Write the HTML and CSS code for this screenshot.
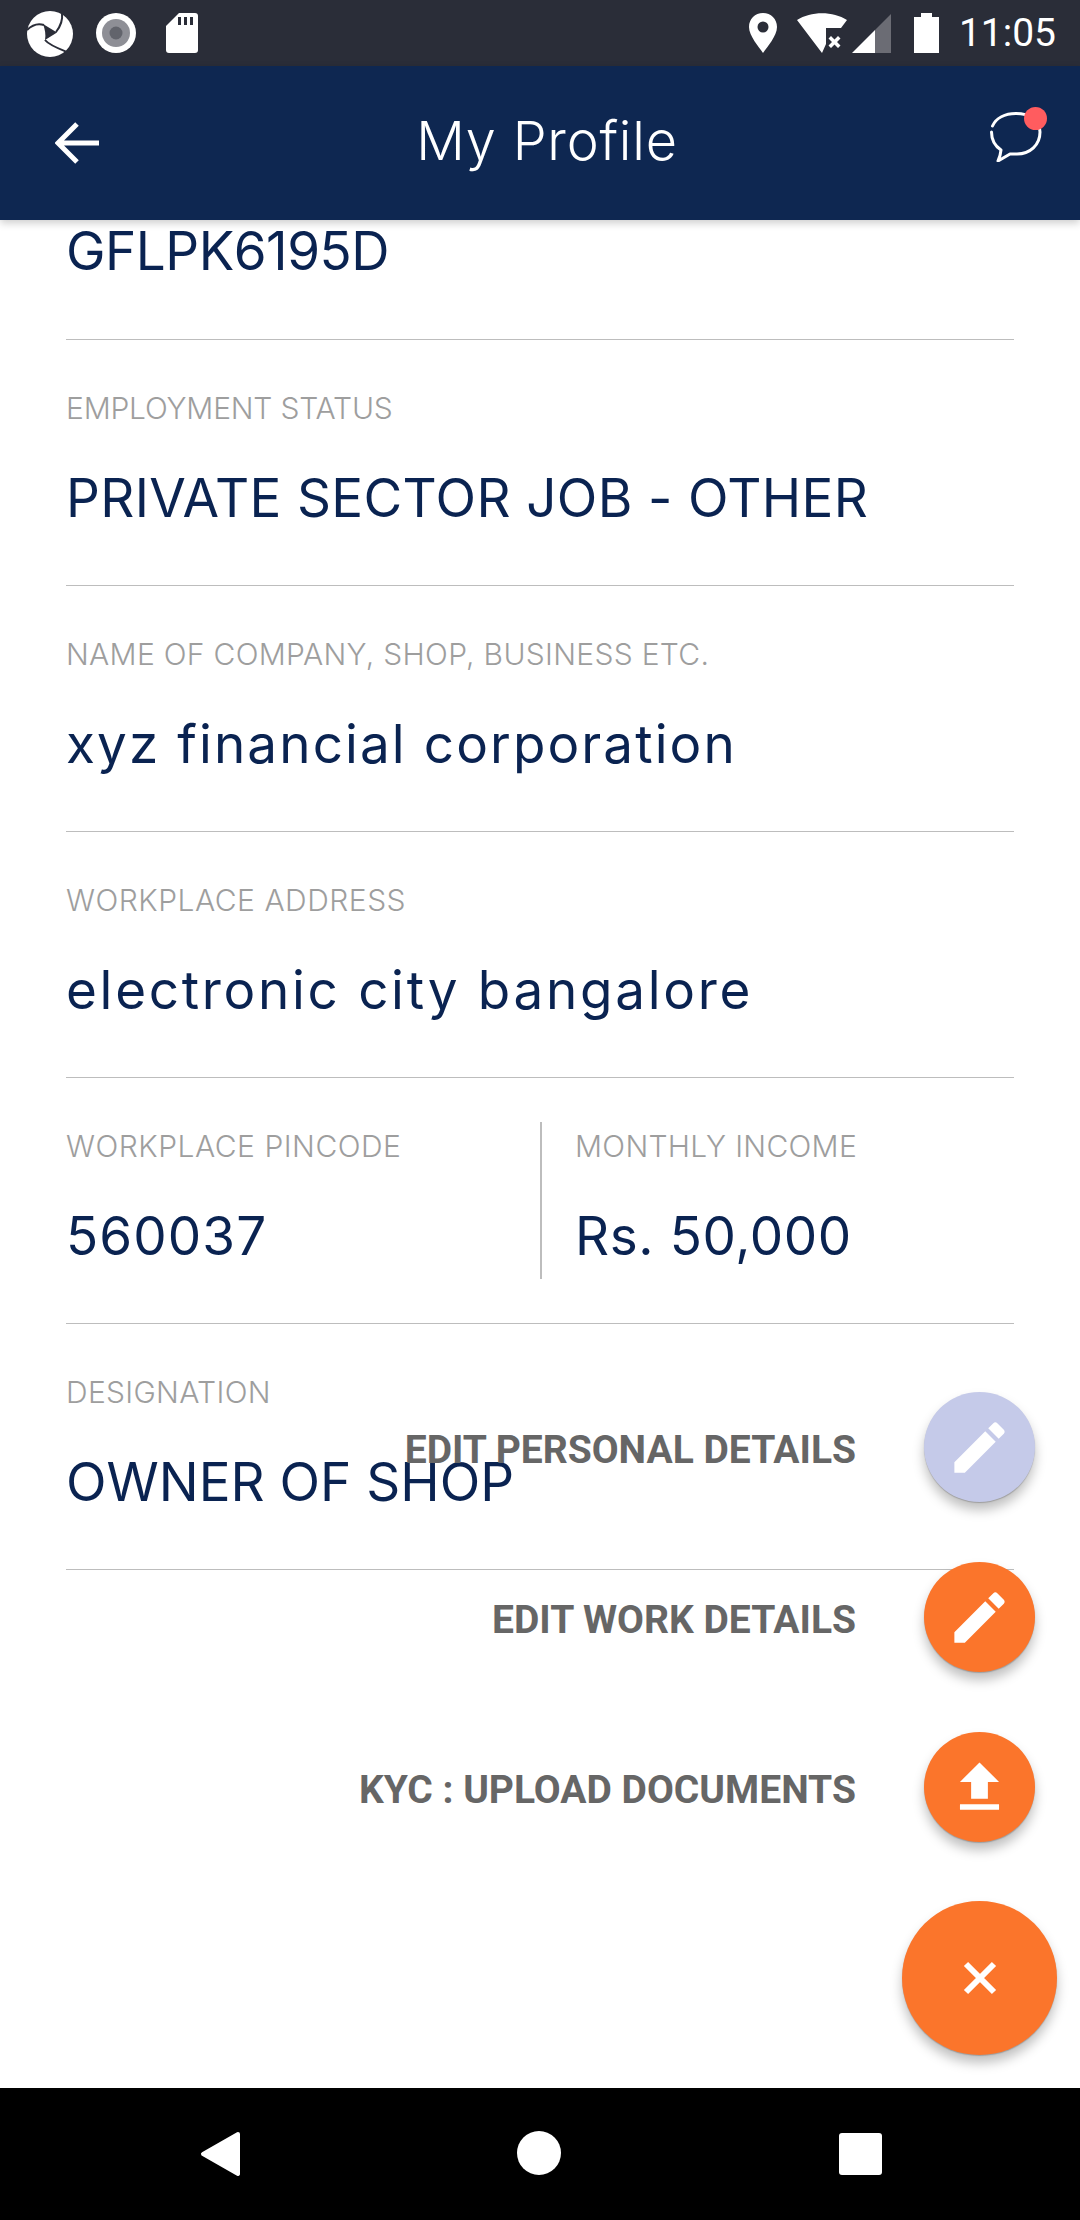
FILE: index.html
```html
<!DOCTYPE html>
<html lang="en">
<head>
    <meta charset="UTF-8">
    <meta name="viewport" content="width=device-width, initial-scale=1.0">
    <title>My Profile</title>
    <link rel="stylesheet" href="styles.css">
</head>
<body>
    <div class="screen">
        <div class="status-bar">
            <div class="status-left">
                <svg class="ic-logo" width="47" height="47" viewBox="0 0 47 47">
                    <circle cx="24" cy="24" r="23" fill="#fff"/>
                    <path d="M17 14L31 22.500L19 30C20 25 19 19 17 14Z" fill="#2a2d38"/>
                    <path d="M18 15C12 13 6 15 1 20" fill="none" stroke="#2a2d38" stroke-width="2"/>
                    <path d="M30 22C34 17 37 11 36 3" fill="none" stroke="#2a2d38" stroke-width="2"/>
                    <path d="M19 30C23 35 31 38 41 42" fill="none" stroke="#2a2d38" stroke-width="2"/>
                </svg>
                <svg class="ic-record" width="40" height="40" viewBox="0 0 40 40">
                    <circle cx="20" cy="20" r="20" fill="#fff"/>
                    <circle cx="20" cy="20" r="14" fill="#8e8f96"/>
                    <circle cx="20" cy="20" r="6.500" fill="#62646c"/>
                </svg>
                <svg class="ic-sd" width="32" height="40" viewBox="0 0 32 40">
                    <path d="M13 0H29a3 3 0 0 1 3 3V37a3 3 0 0 1-3 3H3a3 3 0 0 1-3-3V13Z" fill="#fff"/>
                    <path d="M12 4h3v8h-3zM18 4h3v8h-3zM24 4h3v8h-3z" fill="#2a2d38"/>
                </svg>
            </div>
            <div class="status-right">
                <svg class="ic-pin" width="28" height="40" viewBox="0 0 28 40">
                    <path d="M14 0C6 0 0 6 0 14C0 23 10 34 14 40C18 34 28 23 28 14C28 6 22 0 14 0Z" fill="#fff"/>
                    <circle cx="14" cy="14" r="5.500" fill="#2a2d38"/>
                </svg>
                <svg class="ic-wifi" width="50" height="40" viewBox="0 0 50 40">
                    <path d="M0 7C14 -2 36 -2 50 7L44 15H29V31L25 40Z" fill="#fff"/>
                    <path d="M34 23l3.500 3.500L41 23l2.500 2.500L40 29l3.500 3.500L41 35l-3.500-3.500L34 35l-2.500-2.500L35 29l-3.500-3.500Z" fill="#fff"/>
                </svg>
                <svg class="ic-signal" width="39" height="39" viewBox="0 0 39 39">
                    <path d="M39 0V39H23V16Z" fill="#6b6c74"/>
                    <path d="M23 16V39H0Z" fill="#fff"/>
                </svg>
                <svg class="ic-battery" width="25" height="40" viewBox="0 0 25 40">
                    <path d="M7 0H18V4H25V40H0V4H7Z" fill="#fff"/>
                </svg>
                <span class="clock">11:05</span>
            </div>
        </div>

        <header class="app-bar">
            <svg class="back" width="44" height="42" viewBox="0 0 44 42">
                <path d="M44 21H4M22 2L3 21L22 40" fill="none" stroke="#fff" stroke-width="5"/>
            </svg>
            <h1>My Profile</h1>
            <div class="chat">
                <svg width="52" height="50" viewBox="0 0 52 50">
                    <path d="M2.500 14C6 6 15 1.500 26 1.500C39 1.500 50 8 50 20C50 33 40 42 27 42L20 42L8 49C9.500 46 10.500 43 11 38C5 34 1.500 29 1.500 20" fill="none" stroke="#fff" stroke-width="3" stroke-linejoin="round" stroke-linecap="round"/>
                </svg>
                <span class="dot"></span>
            </div>
        </header>

        <main class="details">
            <div class="row row-cut">
                <div class="value v-pan">GFLPK6195D</div>
            </div>
            <div class="row">
                <div class="label label-tight">EMPLOYMENT STATUS</div>
                <div class="value v-status">PRIVATE SECTOR JOB - OTHER</div>
            </div>
            <div class="row">
                <div class="label">NAME OF COMPANY, SHOP, BUSINESS ETC.</div>
                <div class="value v-company">xyz financial corporation</div>
            </div>
            <div class="row">
                <div class="label label-wide">WORKPLACE ADDRESS</div>
                <div class="value v-address">electronic city bangalore</div>
            </div>
            <div class="row row-split">
                <div class="col">
                    <div class="label label-wide">WORKPLACE PINCODE</div>
                    <div class="value v-number">560037</div>
                </div>
                <div class="col col-right">
                    <div class="label">MONTHLY INCOME</div>
                    <div class="value v-income">Rs. 50,000</div>
                </div>
            </div>
            <div class="row">
                <div class="label">DESIGNATION</div>
                <div class="value">OWNER OF SHOP</div>
            </div>
        </main>

        <div class="fab-menu">
            <div class="fab-item">
                <span class="fab-label">EDIT PERSONAL DETAILS</span>
                <button class="fab fab-muted">
                    <svg width="67" height="67" viewBox="0 0 24 24"><path d="M3 17.250V21h3.750L17.810 9.940l-3.750-3.750L3 17.250zM20.710 7.040c.39-.39.39-1.020 0-1.410l-2.340-2.340c-.39-.39-1.020-.39-1.410 0l-1.830 1.830 3.750 3.750 1.830-1.830z" fill="#fff"/></svg>
                </button>
            </div>
            <div class="fab-item">
                <span class="fab-label">EDIT WORK DETAILS</span>
                <button class="fab">
                    <svg width="67" height="67" viewBox="0 0 24 24"><path d="M3 17.250V21h3.750L17.810 9.940l-3.750-3.750L3 17.250zM20.710 7.040c.39-.39.39-1.020 0-1.410l-2.340-2.340c-.39-.39-1.020-.39-1.410 0l-1.830 1.830 3.750 3.750 1.830-1.830z" fill="#fff"/></svg>
                </button>
            </div>
            <div class="fab-item">
                <span class="fab-label">KYC : UPLOAD DOCUMENTS</span>
                <button class="fab">
                    <svg width="67" height="67" viewBox="0 0 24 24"><path d="M9 16h6v-6h4l-7-7-7 7h4zm-4 2h14v2H5z" fill="#fff"/></svg>
                </button>
            </div>
            <button class="fab fab-main">
                <svg width="34" height="34" viewBox="0 0 34 34"><path d="M3 3L31 31M31 3L3 31" stroke="#fff" stroke-width="6" fill="none"/></svg>
            </button>
        </div>

        <nav class="nav-bar">
            <svg class="nav-back" width="40" height="46" viewBox="0 0 40 46">
                <path d="M38 3L3 23L38 43Z" fill="#fff" stroke="#fff" stroke-width="4" stroke-linejoin="round"/>
            </svg>
            <span class="nav-home"></span>
            <span class="nav-square"></span>
        </nav>
    </div>
</body>
</html>
```

FILE: styles.css
```css
*{box-sizing:border-box;}
html,body{margin:0;padding:0;}
body{width:1080px;height:2220px;overflow:hidden;background-color:#fff;font-family:"Inter","Liberation Sans",sans-serif;}
.screen{position:relative;width:1080px;height:2220px;display:flex;flex-direction:column;}

.status-bar{height:66px;background-color:#2a2d38;display:flex;justify-content:space-between;align-items:center;flex:none;}
.status-left{display:flex;align-items:center;padding-left:26px;}
.ic-logo{margin-right:23px;}
.ic-record{margin-right:30px;}
.status-right{display:flex;align-items:center;padding-right:24px;}
.ic-pin{margin-right:20px;}
.ic-wifi{margin-right:5px;}
.ic-signal{margin-right:23px;}
.ic-battery{margin-right:20px;}
.clock{font-family:"Roboto",sans-serif;font-size:39px;color:#fff;line-height:44px;}

.app-bar{position:relative;z-index:2;flex:none;height:154px;background-color:#0e2751;box-shadow:0 3px 8px rgba(0,0,0,0.2);display:flex;align-items:center;justify-content:space-between;padding:0 38px 0 55px;}
.app-bar h1{margin:-5px 0 0 5px;font-size:54px;font-weight:300;color:#fff;letter-spacing:0.8px;}
.chat{position:relative;width:52px;height:50px;margin-top:-12px;}
.chat svg{display:block;}
.dot{position:absolute;top:-5px;right:-5px;width:23px;height:23px;border-radius:50%;background-color:#ff5c5f;}

.details{flex:1;overflow:hidden;padding:0 66px;}
.row{height:246px;padding:44px 0;border-bottom:1px solid #bdbdbd;}
.row-cut{height:133px;padding:0;}
.label{height:48px;line-height:48px;font-size:30px;font-weight:300;letter-spacing:0.3px;color:#9e9e9e;white-space:nowrap;}
.label-tight{letter-spacing:-0.2px;}
.label-wide{letter-spacing:0.5px;}
.value{height:88px;line-height:88px;margin-top:22px;font-size:53px;color:#0a2351;white-space:nowrap;}
.row-cut .value{margin-top:-13px;}
.v-pan{letter-spacing:-0.5px;}
.v-status{letter-spacing:0.35px;}
.v-company{letter-spacing:2.1px;}
.v-address{letter-spacing:2.7px;}
.v-number{letter-spacing:1.1px;}
.v-income{letter-spacing:0.6px;}
.row-split{display:flex;}
.col{width:474px;}
.col-right{border-left:2px solid #bdbdbd;padding-left:33px;flex:1;}

.fab-menu{position:absolute;right:23px;top:1392px;display:flex;flex-direction:column;align-items:flex-end;}
.fab-item{display:flex;align-items:center;height:110px;margin:0 22px 60px 0;}
.fab-label{font-family:"Roboto",sans-serif;font-weight:700;font-size:39px;color:#666;margin:5px 68px 0 0;white-space:nowrap;}
.fab{width:111px;height:110px;border:0;padding:0;border-radius:50%;background-color:#fb752b;box-shadow:0 1px 1px rgba(0,0,0,0.2),0 8px 12px rgba(0,0,0,0.25);display:flex;align-items:center;justify-content:center;}
.fab-muted{background-color:#c5cae9;}
.fab-main{width:155px;height:154px;margin-top:-1px;}

.nav-bar{position:absolute;left:0;bottom:0;width:1080px;height:132px;background-color:#000;display:flex;align-items:center;padding-left:200px;}
.nav-back{flex:none;}
.nav-home{width:44px;height:44px;border-radius:50%;background-color:#fff;margin-left:277px;margin-top:-2px;}
.nav-square{width:43px;height:42px;border-radius:3px;background-color:#fff;margin-left:278px;}
```
